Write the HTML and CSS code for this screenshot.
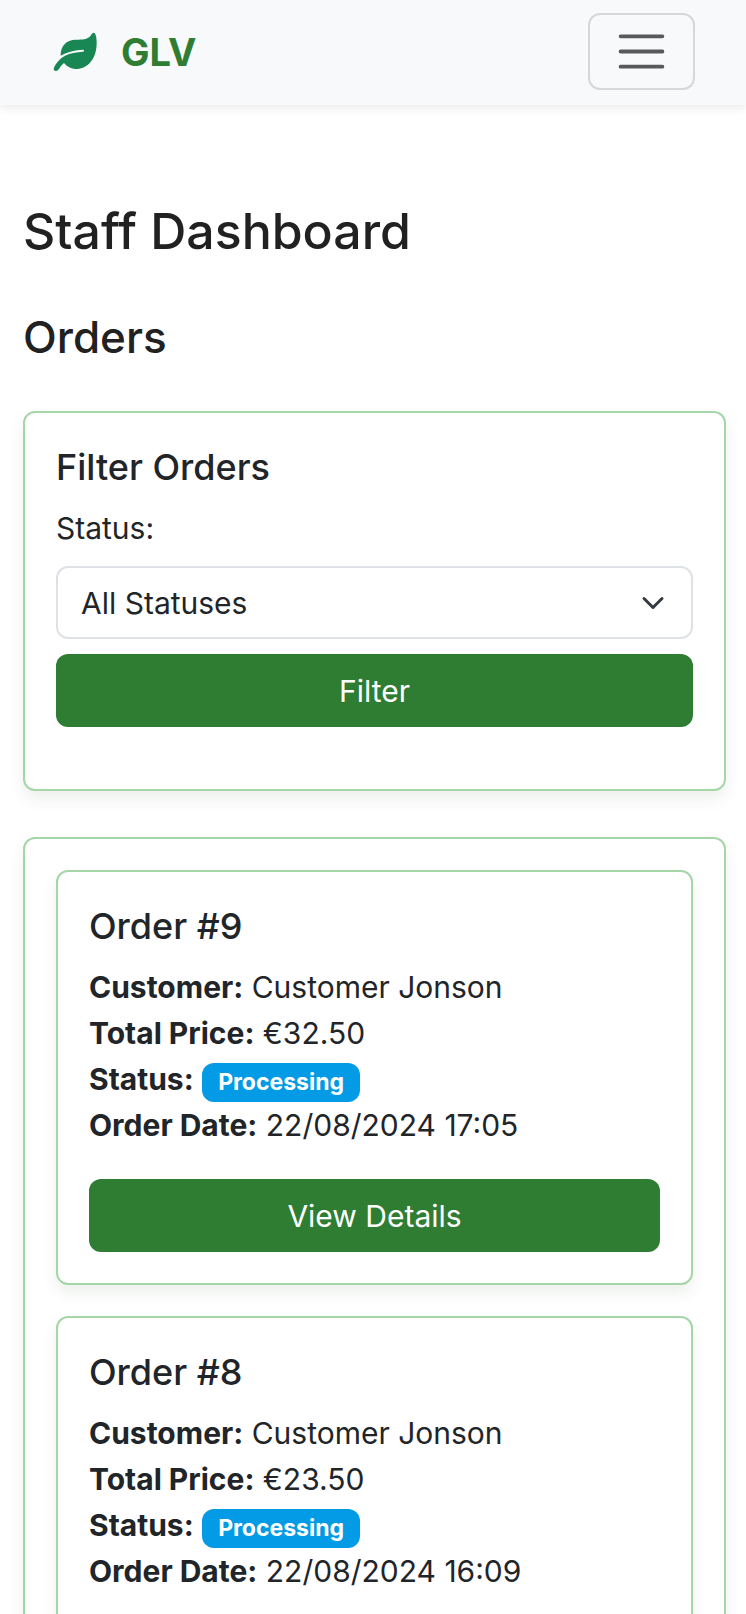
FILE: index.html
```html
<!DOCTYPE html>
<html lang="en">
<head>
<meta charset="utf-8">
<meta name="viewport" content="width=device-width, initial-scale=1">
<title>Staff Dashboard</title>
<link rel="stylesheet" href="styles.css">
</head>
<body>
<div class="page">
  <header class="navbar">
    <a class="brand" href="#">
      <svg class="brand-icon" viewBox="160 95 132 120" aria-hidden="true"><path fill="#198754" d="M282 97C288 97 291 112 291 128C291 175 265 206 228 206C214 206 202 199 193 188C184 195 181 203 175 209C170 214 162 212 162 205C166 192 180 174 196 166C212 158 230 155 250 154a3 3 0 0 0 0-6C225 148 203 155 183 166C182 138 200 118 228 118C250 118 262 118 272 107C276 102 278 97 282 97Z"/></svg>
      <span>GLV</span>
    </a>
    <button class="toggler" type="button" aria-label="Toggle navigation">
      <svg class="toggler-icon" viewBox="0 0 30 30" aria-hidden="true"><path stroke="#58595b" stroke-linecap="round" stroke-width="2" d="M4 7h22M4 15h22M4 23h22"/></svg>
    </button>
  </header>
  <main class="content">
    <h1 class="title">Staff Dashboard</h1>
    <h2 class="subtitle">Orders</h2>
    <section class="card filter">
      <h3 class="card-title">Filter Orders</h3>
      <form class="filter-form">
        <label class="label" for="status">Status:</label>
        <select class="select" id="status"><option>All Statuses</option></select>
        <button class="btn" type="button">Filter</button>
      </form>
    </section>
    <section class="card orders">
      <article class="card">
        <h3 class="card-title">Order #9</h3>
        <p class="details">
          <strong>Customer:</strong> Customer Jonson<br>
          <strong>Total Price:</strong> €32.50<br>
          <strong>Status:</strong> <span class="badge">Processing</span><br>
          <strong>Order Date:</strong> 22/08/2024 17:05
        </p>
        <button class="btn" type="button">View Details</button>
      </article>
      <article class="card">
        <h3 class="card-title">Order #8</h3>
        <p class="details">
          <strong>Customer:</strong> Customer Jonson<br>
          <strong>Total Price:</strong> €23.50<br>
          <strong>Status:</strong> <span class="badge">Processing</span><br>
          <strong>Order Date:</strong> 22/08/2024 16:09
        </p>
      </article>
    </section>
  </main>
</div>
</body>
</html>
```

FILE: styles.css
```css
* {
  box-sizing: border-box;
}

body {
  margin: 0;
  background: #fff;
  color: #212529;
  font-family: Inter, "Liberation Sans", sans-serif;
  font-size: 30px;
  line-height: 46px;
}

.page {
  height: 100vh;
  overflow-y: auto;
  scrollbar-width: none;
}

.navbar {
  display: flex;
  align-items: center;
  justify-content: space-between;
  padding: 13px 51px 15px 53px;
  background: #f8f9fa;
  box-shadow: 0 4px 8px rgba(0, 0, 0, 0.07);
}

.brand {
  display: flex;
  align-items: center;
  gap: 24px;
  color: #2e7d32;
  font-size: 38px;
  font-weight: 700;
  text-decoration: none;
}

.brand-icon {
  width: 44px;
  height: 40px;
}

.toggler {
  display: flex;
  padding: 8px 23px;
  background: none;
  border: 2px solid #d5d7d8;
  border-radius: 12px;
}

.toggler-icon {
  width: 57px;
  height: 57px;
}

.content {
  padding: 94px 20px 46px 23px;
}

.title,
.subtitle,
.card-title {
  margin: 0;
  font-weight: 500;
}

.title {
  margin-bottom: 46px;
  color: #212121;
  font-size: 50px;
  line-height: 64px;
}

.subtitle {
  margin-bottom: 46px;
  color: #212121;
  font-size: 44px;
  line-height: 56px;
}

.card {
  padding: 31px;
  background: #fff;
  border: 2px solid #a5d6a7;
  border-radius: 12px;
  box-shadow: 0 8px 15px rgba(27, 60, 30, 0.08);
}

.filter {
  margin-bottom: 46px;
  padding-bottom: 62px;
}

.card-title {
  margin-bottom: 15px;
  font-size: 36px;
  line-height: 46px;
}

.filter-form {
  display: flex;
  flex-direction: column;
  gap: 15px;
}

.select,
.btn {
  width: 100%;
  height: 73px;
  border-radius: 12px;
  font-family: inherit;
  font-size: 30px;
}

.select {
  appearance: none;
  padding: 0 60px 0 23px;
  border: 2px solid #dee2e6;
  color: #212529;
  background: #fff url("data:image/svg+xml,%3Csvg xmlns='http://www.w3.org/2000/svg' viewBox='0 0 16 16'%3E%3Cpath fill='none' stroke='%23343a40' stroke-linecap='round' stroke-linejoin='round' stroke-width='2' d='m2 5 6 6 6-6'/%3E%3C/svg%3E") no-repeat right 26px center / 24px 24px;
}

.btn {
  display: block;
  padding: 0;
  border: 0;
  background: #2e7d32;
  color: #fff;
}

.orders {
  display: flex;
  flex-direction: column;
  gap: 31px;
}

.details {
  margin: 0 0 31px;
}

.badge {
  display: inline-block;
  padding: 8px 16px;
  border-radius: 12px;
  background: #039be5;
  color: #fff;
  font-size: 23px;
  font-weight: 700;
  line-height: 23px;
  vertical-align: bottom;
}
```
